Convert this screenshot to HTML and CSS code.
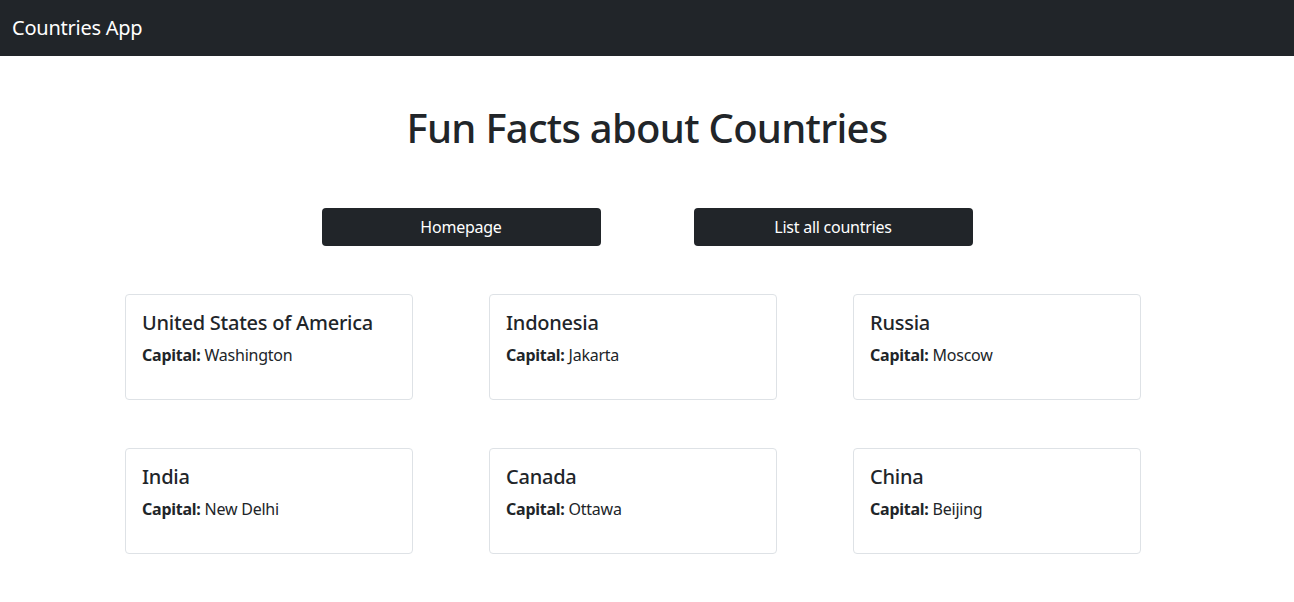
FILE: index.html
```html
<!DOCTYPE html>
<html lang="en">
<head>
<meta charset="utf-8">
<title>Countries App</title>
<link rel="stylesheet" href="styles.css">
</head>
<body>
<nav class="navbar">
  <a class="brand" href="#">Countries App</a>
</nav>
<main class="main">
  <h1 class="title">Fun Facts about Countries</h1>
  <div class="actions">
    <a class="btn" href="#">Homepage</a>
    <a class="btn" href="#">List all countries</a>
  </div>
  <div class="cards">
    <div class="card"><h5 class="card-title">United States of America</h5><p class="card-text"><strong>Capital:</strong> Washington</p></div>
    <div class="card"><h5 class="card-title">Indonesia</h5><p class="card-text"><strong>Capital:</strong> Jakarta</p></div>
    <div class="card"><h5 class="card-title">Russia</h5><p class="card-text"><strong>Capital:</strong> Moscow</p></div>
    <div class="card"><h5 class="card-title">India</h5><p class="card-text"><strong>Capital:</strong> New Delhi</p></div>
    <div class="card"><h5 class="card-title">Canada</h5><p class="card-text"><strong>Capital:</strong> Ottawa</p></div>
    <div class="card"><h5 class="card-title">China</h5><p class="card-text"><strong>Capital:</strong> Beijing</p></div>
  </div>
</main>
</body>
</html>
```
FILE: styles.css
```css
* { box-sizing: border-box; }
html, body { margin: 0; padding: 0; }
body {
  font-family: "Noto Sans", "DejaVu Sans", sans-serif;
  font-size: 16px;
  line-height: 1.5;
  letter-spacing: -0.015em;
  color: #212529;
  background: #fff;
}
.navbar {
  height: 56px;
  background: #212529;
  display: flex;
  align-items: center;
  padding: 0 12px;
}
.brand {
  color: #fff;
  text-decoration: none;
  font-size: 20px;
  line-height: 30px;
}
.main { padding-bottom: 40px; }
.title {
  margin: 48px 0 0;
  text-align: center;
  font-size: 40px;
  font-weight: 500;
  line-height: 48px;
  letter-spacing: -0.018em;
}
.actions {
  display: flex;
  justify-content: center;
  gap: 93px;
  margin-top: 56px;
}
.btn {
  width: 279px;
  height: 38px;
  display: flex;
  align-items: center;
  justify-content: center;
  background: #212529;
  color: #fff;
  text-decoration: none;
  border-radius: 4px;
  font-size: 16px;
}
.cards {
  display: grid;
  grid-template-columns: repeat(3, 288px);
  column-gap: 76px;
  row-gap: 48px;
  justify-content: center;
  padding-right: 28px;
  margin-top: 48px;
}
.card {
  border: 1px solid #dee2e6;
  border-radius: 4px;
  padding: 16px;
  height: 106px;
}
.card-title {
  margin: 0 0 8px;
  font-size: 20px;
  font-weight: 500;
  line-height: 24px;
}
.card-text { margin: 0; }
.card-text strong { font-weight: 700; }
```
